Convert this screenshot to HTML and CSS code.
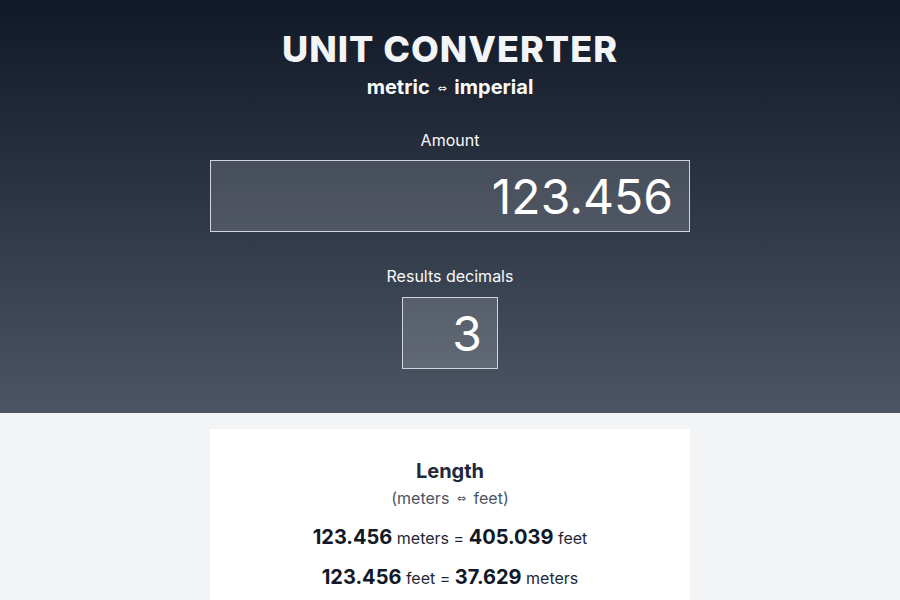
FILE: index.html
```html
<!DOCTYPE html>
<html lang="en">
<head>
<meta charset="utf-8">
<title>Unit Converter</title>
<link rel="stylesheet" href="styles.css">
</head>
<body>
<header class="hero">
  <h1 class="title">UNIT CONVERTER</h1>
  <p class="subtitle">metric <span class="arrow">⇔</span> imperial</p>
  <label class="field-label" for="amount">Amount</label>
  <input class="amount-input" id="amount" type="text" value="123.456">
  <label class="field-label decimals-label" for="decimals">Results decimals</label>
  <input class="decimals-input" id="decimals" type="text" value="3">
</header>
<main class="content">
  <section class="card">
    <h2 class="card-title">Length</h2>
    <p class="card-sub">(meters <span class="arrow">⇔</span> feet)</p>
    <p class="result first"><b>123.456</b> meters = <b>405.039</b> feet</p>
    <p class="result"><b>123.456</b> feet = <b>37.629</b> meters</p>
  </section>
</main>
</body>
</html>
```
FILE: styles.css
```css
* { box-sizing: border-box; }
html, body { margin: 0; padding: 0; }
body {
  font-family: Inter, "Noto Sans", sans-serif;
  background: #f3f4f6;
  color: #111827;
}
.hero {
  background: linear-gradient(180deg, #111827 0%, #4b5563 100%);
  padding: 27px 0 44px;
  display: flex;
  flex-direction: column;
  align-items: center;
  color: #f9fafb;
}
.title {
  margin: 0;
  font-size: 36px;
  line-height: 44px;
  font-weight: 800;
  letter-spacing: 1px;
  color: #f3f4f6;
}
.subtitle {
  margin: 2px 0 0;
  font-size: 20px;
  line-height: 28px;
  font-weight: 700;
}
.arrow {
  font-family: "DejaVu Sans", sans-serif;
  font-size: 11px;
  font-weight: 400;
  vertical-align: 2px;
  margin: 0 3px;
}
.field-label {
  display: block;
  margin-top: 25px;
  font-size: 16px;
  line-height: 24px;
}
.decimals-label { margin-top: 32px; }
.amount-input, .decimals-input {
  display: block;
  margin-top: 8px;
  height: 72px;
  border: 1px solid #d1d5db;
  background: rgba(255,255,255,0.15);
  color: #ffffff;
  font-family: Inter, "Noto Sans", sans-serif;
  font-size: 48px;
  font-weight: 400;
  text-align: right;
  outline: none;
}
.amount-input {
  width: 480px;
  padding: 0 16px;
}
.decimals-input {
  width: 96px;
  margin-top: 9px;
  padding: 0 15px;
}
.content {
  display: flex;
  justify-content: center;
  padding-top: 16px;
}
.card {
  width: 480px;
  background: #ffffff;
  padding: 28px 16px 24px;
  text-align: center;
}
.card-title {
  margin: 0;
  font-size: 20px;
  line-height: 28px;
  font-weight: 700;
  color: #1e293b;
}
.card-sub {
  margin: 1px 0 0;
  font-size: 16px;
  line-height: 24px;
  color: #4b5563;
}
.result {
  margin: 11px 0 0;
  font-size: 16px;
  line-height: 28px;
  color: #1f2937;
}
.result.first { margin-top: 12px; }
.result b {
  font-size: 20px;
  font-weight: 700;
  color: #111827;
}
```
